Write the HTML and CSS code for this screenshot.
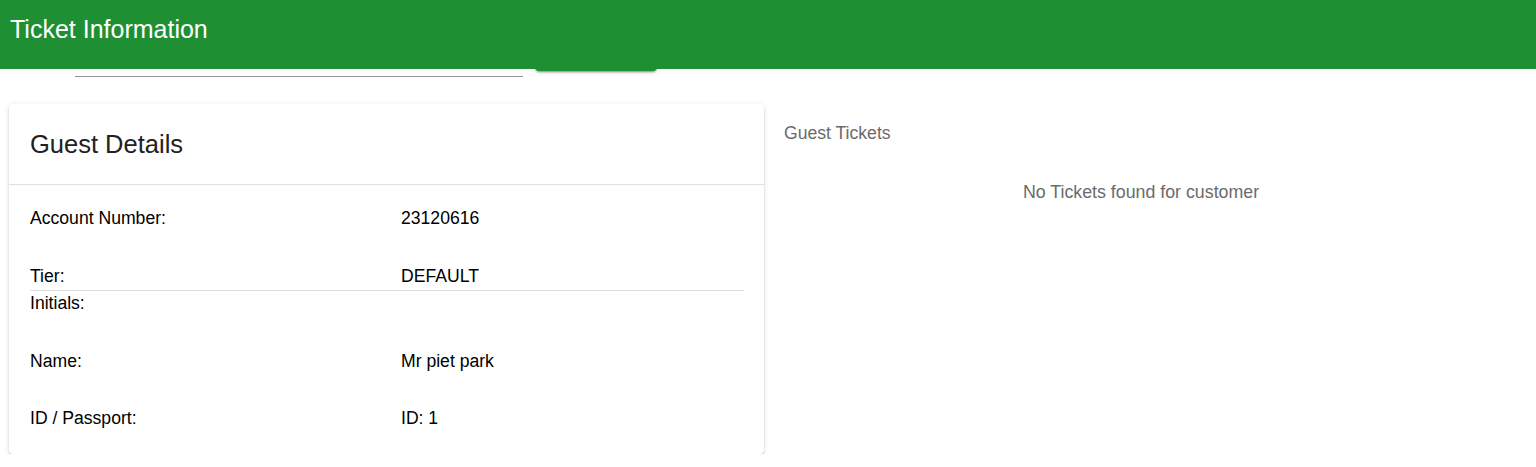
FILE: index.html
```html
<!DOCTYPE html>
<html>
<head>
<meta charset="utf-8">
<title>Ticket Information</title>
<link rel="stylesheet" href="styles.css">
</head>
<body>
<header class="topbar">
  <h1 class="topbar-title">Ticket Information</h1>
</header>
<main class="page">
  <div class="search-row">
    <div class="search-input"></div>
    <button class="search-btn" type="button">Search</button>
  </div>
  <div class="content">
    <section class="card">
      <div class="card-header">
        <h2 class="card-title">Guest Details</h2>
      </div>
      <div class="card-body">
        <div class="row"><span class="label">Account Number:</span><span class="value">23120616</span></div>
        <div class="row row-divided"><span class="label">Tier:</span><span class="value">DEFAULT</span></div>
        <div class="row row-after-divider"><span class="label">Initials:</span><span class="value"></span></div>
        <div class="row row-tight"><span class="label">Name:</span><span class="value">Mr piet park</span></div>
        <div class="row row-last"><span class="label">ID / Passport:</span><span class="value">ID: 1</span></div>
      </div>
    </section>
    <section class="tickets">
      <h3 class="tickets-title">Guest Tickets</h3>
      <p class="tickets-empty">No Tickets found for customer</p>
    </section>
  </div>
</main>
</body>
</html>
```

FILE: styles.css
```css
* { box-sizing: border-box; }

body {
  margin: 0;
  font-family: "Liberation Sans", Arial, sans-serif;
  background: #ffffff;
  color: #000000;
}

.topbar {
  position: absolute;
  top: 0;
  left: 0;
  right: 0;
  height: 69px;
  background: #1e9033;
  z-index: 10;
  display: flex;
  align-items: center;
  padding-left: 10px;
}

.topbar-title {
  margin: 0 0 11px 0;
  font-size: 25px;
  font-weight: 400;
  color: #ffffff;
  line-height: 28px;
}

.search-row {
  display: flex;
  align-items: flex-end;
  height: 77px;
  padding-left: 75px;
}

.search-input {
  width: 448px;
  height: 40px;
  border-bottom: 1px solid #949494;
}

.search-btn {
  width: 122px;
  height: 37px;
  margin: 0 0 6px 12px;
  border: none;
  border-radius: 4px;
  background: #1e9033;
  color: #ffffff;
  box-shadow: 0 3px 1px -2px rgba(0,0,0,.2), 0 2px 2px 0 rgba(0,0,0,.14), 0 1px 5px 0 rgba(0,0,0,.12);
  font-family: inherit;
}

.content {
  display: flex;
  align-items: flex-start;
  gap: 8px;
  padding: 27px 26px 0 9px;
}

.card {
  width: 755px;
  flex: none;
  background: #ffffff;
  border-radius: 4px;
  box-shadow: 0 3px 1px -2px rgba(0,0,0,.2), 0 2px 2px 0 rgba(0,0,0,.14), 0 1px 5px 0 rgba(0,0,0,.12);
}

.card-header {
  height: 81px;
  border-bottom: 1px solid #e0e0e0;
  padding: 25px 21px 0;
}

.card-title {
  margin: 0;
  font-size: 25.5px;
  font-weight: 400;
  line-height: 30px;
  color: #212121;
}

.card-body {
  padding: 23px 20px 26px 21px;
}

.row {
  display: grid;
  grid-template-columns: 371px 1fr;
  font-size: 17.6px;
  line-height: 20px;
  height: 20px;
  margin-bottom: 38px;
  box-sizing: content-box;
}

.row-divided {
  margin-bottom: 0;
  padding-bottom: 4px;
  border-bottom: 1px solid #dddddd;
}

.row-after-divider {
  padding-top: 2px;
}

.row-tight {
  margin-bottom: 37px;
}

.row-last {
  margin-bottom: 0;
}

.tickets {
  flex: 1;
  padding: 19px 0 0 12px;
}

.tickets-title {
  margin: 0;
  font-size: 17.6px;
  font-weight: 400;
  line-height: 20px;
  color: #6b6b6b;
}

.tickets-empty {
  margin: 39px 0 0 -12px;
  text-align: center;
  font-size: 17.8px;
  line-height: 20px;
  color: #6b6b6b;
}
```
